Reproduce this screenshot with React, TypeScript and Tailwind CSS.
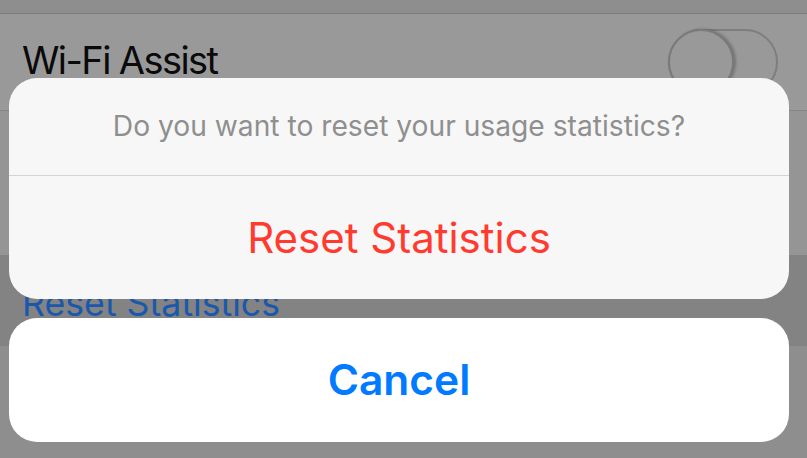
import React from 'react';

const font = { fontFamily: 'Inter, "Noto Sans", sans-serif' };

function Toggle() {
  return (
    <div className="relative w-[110px] h-[66px] mt-[15px] rounded-full border-2 border-[#7e7e7e] shrink-0">
      <div className="absolute -left-[2px] -top-[2px] w-[66px] h-[66px] rounded-full border-2 border-[#7a7a7a] bg-[#999999] shadow-[2px_0_3px_rgba(0,0,0,0.25)]" />
    </div>
  );
}

export default function App() {
  return (
    <div className="relative w-[807px] h-[458px] overflow-hidden bg-[#8e8e8e]" style={font}>
      {/* dimmed settings page behind */}
      <div className="flex flex-col">
        <div className="h-[14px] bg-[#8e8e8e] border-b border-[#7c7c7c]" />
        <div className="h-[97px] bg-[#999999] flex items-start justify-between pl-[22px] pr-[29px] border-b border-[#868686]">
          <span className="mt-[19px] text-[38px] leading-[54px] text-[#0a0a0a] tracking-[-1.6px]">Wi-Fi Assist</span>
          <Toggle />
        </div>
        <div className="h-[144px] bg-[#959595]" />
        <div className="h-[91px] bg-[#838383] pl-[22px] pt-[30px]">
          <span className="block text-[35.7px] leading-[36px] text-[#1a58ad]">Reset Statistics</span>
        </div>
      </div>

      {/* action sheet */}
      <div className="absolute inset-0 pt-[78px] pl-[9px] flex flex-col gap-[19px]">
        <div className="w-[780px] rounded-[28px] bg-[#f7f7f7] flex flex-col">
          <div className="h-[98px] flex items-center justify-center border-b border-[#d4d4d6]">
            <span className="text-[28.2px] text-[#8f8f8f]">Do you want to reset your usage statistics?</span>
          </div>
          <div className="h-[123px] flex items-center justify-center">
            <span className="text-[42px] text-[#ff3b30]">Reset Statistics</span>
          </div>
        </div>
        <div className="w-[780px] h-[124px] rounded-[28px] bg-white flex items-center justify-center">
          <span className="text-[42.5px] font-semibold text-[#007aff]">Cancel</span>
        </div>
      </div>
    </div>
  );
}
